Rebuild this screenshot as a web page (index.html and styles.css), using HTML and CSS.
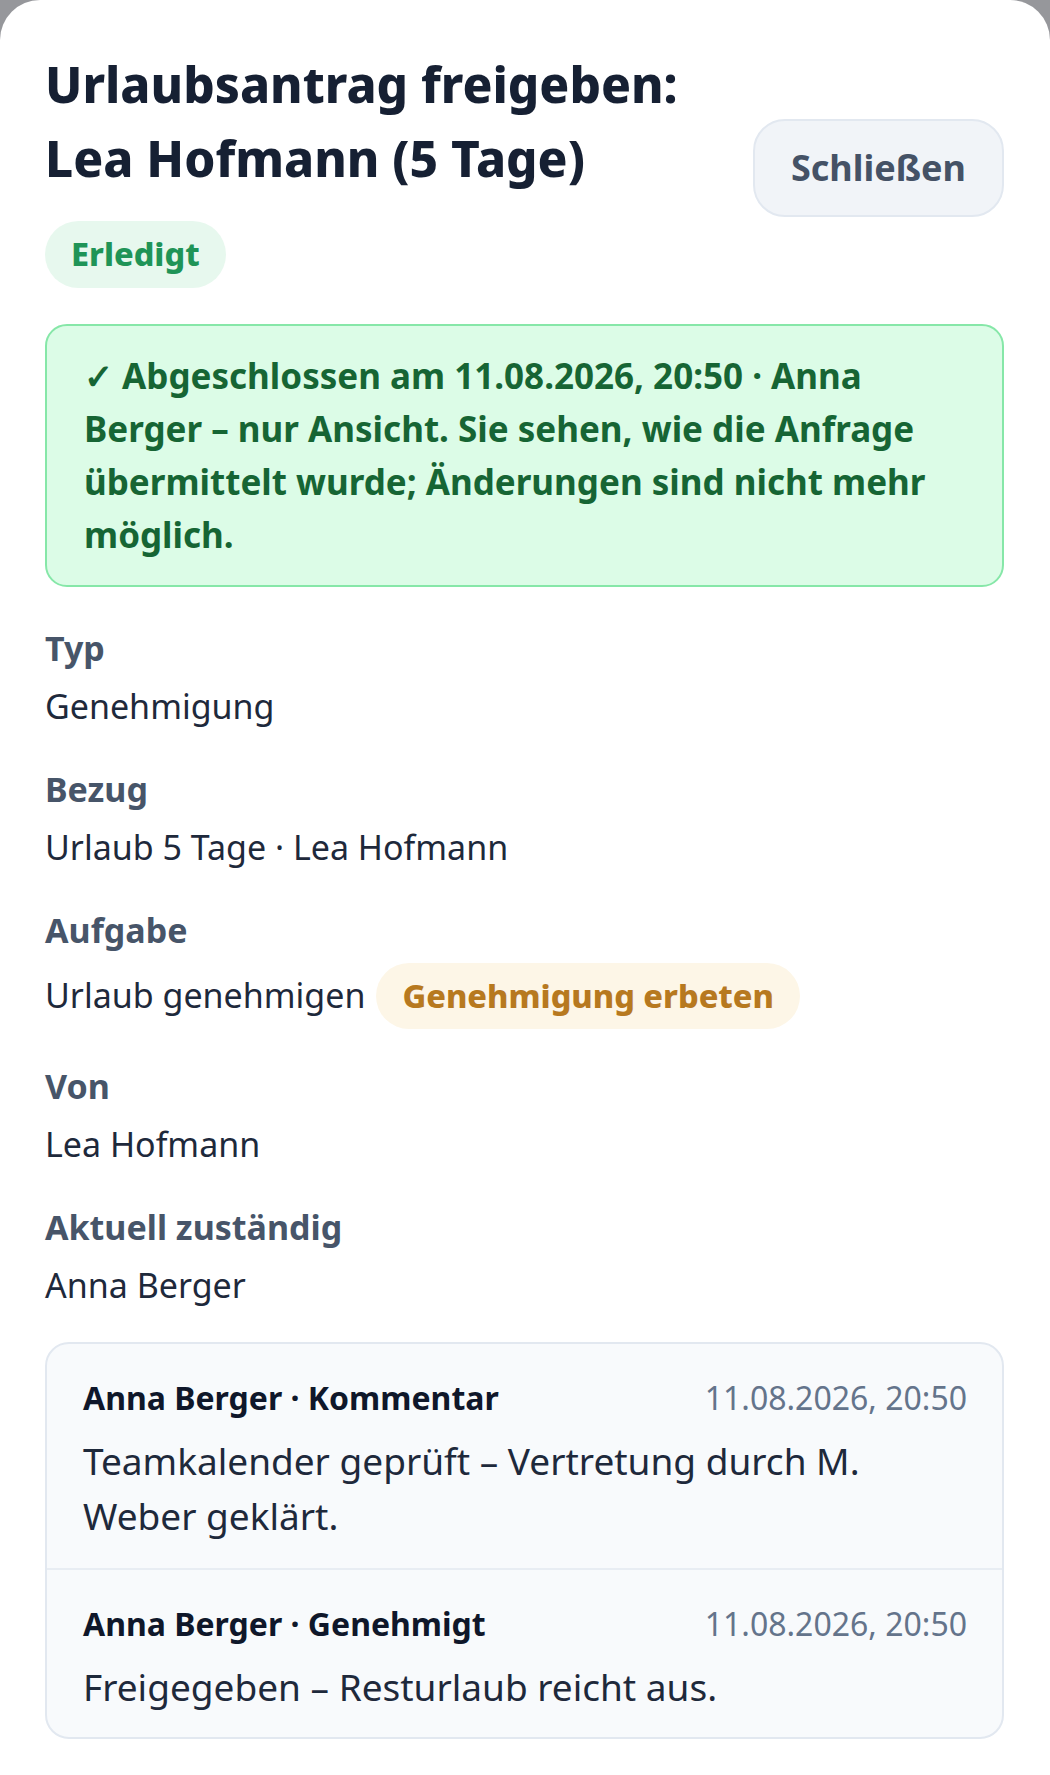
FILE: index.html
```html
<!DOCTYPE html>
<html lang="de">
<head>
    <meta charset="UTF-8">
    <meta name="viewport" content="width=device-width, initial-scale=1.0">
    <title>Urlaubsantrag freigeben</title>
    <link rel="stylesheet" href="styles.css">
</head>
<body>
    <div class="sheet">
        <div class="head">
            <div class="head-main">
                <h1>Urlaubsantrag freigeben:<br>Lea Hofmann (5 Tage)</h1>
                <span class="badge badge-done">Erledigt</span>
            </div>
            <button class="close" type="button">Schließen</button>
        </div>

        <div class="notice">
            ✓ Abgeschlossen am 11.08.2026, 20:50 · Anna Berger – nur Ansicht. Sie sehen, wie die Anfrage übermittelt wurde; Änderungen sind nicht mehr möglich.
        </div>

        <div class="fields">
            <div class="field">
                <div class="label">Typ</div>
                <div class="value">Genehmigung</div>
            </div>
            <div class="field">
                <div class="label">Bezug</div>
                <div class="value">Urlaub 5 Tage · Lea Hofmann</div>
            </div>
            <div class="field">
                <div class="label">Aufgabe</div>
                <div class="value value-row">
                    <span>Urlaub genehmigen</span>
                    <span class="badge badge-wait">Genehmigung erbeten</span>
                </div>
            </div>
            <div class="field">
                <div class="label">Von</div>
                <div class="value">Lea Hofmann</div>
            </div>
            <div class="field">
                <div class="label">Aktuell zuständig</div>
                <div class="value">Anna Berger</div>
            </div>
        </div>

        <!-- Verlauf -->
        <div class="log">
            <div class="entry">
                <div class="entry-head">
                    <span class="entry-who">Anna Berger · Kommentar</span>
                    <span class="entry-time">11.08.2026, 20:50</span>
                </div>
                <div class="entry-text">Teamkalender geprüft – Vertretung durch M. Weber geklärt.</div>
            </div>
            <div class="entry">
                <div class="entry-head">
                    <span class="entry-who">Anna Berger · Genehmigt</span>
                    <span class="entry-time">11.08.2026, 20:50</span>
                </div>
                <div class="entry-text">Freigegeben – Resturlaub reicht aus.</div>
            </div>
        </div>
    </div>
</body>
</html>
```

FILE: styles.css
```css
body {
    margin: 0;
    background-color: #96979b;
    font-family: 'Noto Sans', 'Open Sans', sans-serif;
    color: #1e293b;
}
.sheet {
    background-color: #fff;
    border-radius: 40px 40px 0 0;
    min-height: 1775px;
    box-sizing: border-box;
    padding: 48px 46px 40px 45px;
}
.head {
    display: flex;
    align-items: center;
    justify-content: space-between;
    gap: 20px;
}
.head-main {
    flex: 1;
}
h1 {
    margin: 0 0 26px;
    font-size: 49.5px;
    font-weight: 800;
    line-height: 73.5px;
    color: #162033;
}
.close {
    font-family: inherit;
    font-size: 36px;
    font-weight: 700;
    line-height: 52px;
    color: #455266;
    background-color: #f1f4f8;
    border: 2px solid #e2e8f0;
    border-radius: 32px;
    padding: 21px 36px;
}
.badge {
    display: inline-block;
    font-size: 32.5px;
    font-weight: 800;
    line-height: 46.5px;
    padding: 10px 26px;
    border-radius: 999px;
}
.badge-done {
    color: #1f9457;
    background-color: #e7f8ee;
}
.badge-wait {
    color: #b7791f;
    background-color: #fdf6e7;
}
.notice {
    margin-top: 36px;
    border: 2px solid #86e7a8;
    background-color: #dcfce7;
    border-radius: 22px;
    padding: 23px 37px;
    font-size: 35px;
    font-weight: 700;
    line-height: 53.3px;
    color: #166534;
}
.fields {
    margin-top: 36px;
    display: flex;
    flex-direction: column;
    gap: 32px;
}
.label {
    font-size: 34px;
    font-weight: 700;
    line-height: 51px;
    color: #475569;
    margin-bottom: 7px;
}
.value {
    font-size: 34px;
    line-height: 51px;
    color: #1e293b;
}
.value-row {
    display: flex;
    align-items: center;
    gap: 11px;
}
.log {
    margin-top: 31px;
    border: 2px solid #e2e8f0;
    border-radius: 24px;
    background-color: #f8fafc;
}
.entry {
    padding: 30px 35px 25px 36px;
}
.entry:last-child {
    padding-bottom: 23px;
}
.entry + .entry {
    border-top: 2px solid #e8edf3;
}
.entry-head {
    display: flex;
    justify-content: space-between;
    font-size: 32px;
    line-height: 48px;
}
.entry-who {
    font-weight: 700;
    color: #0f172a;
}
.entry-time {
    color: #64748b;
}
.entry-text {
    margin-top: 11px;
    font-size: 37px;
    line-height: 55px;
    color: #1e293b;
}
```
